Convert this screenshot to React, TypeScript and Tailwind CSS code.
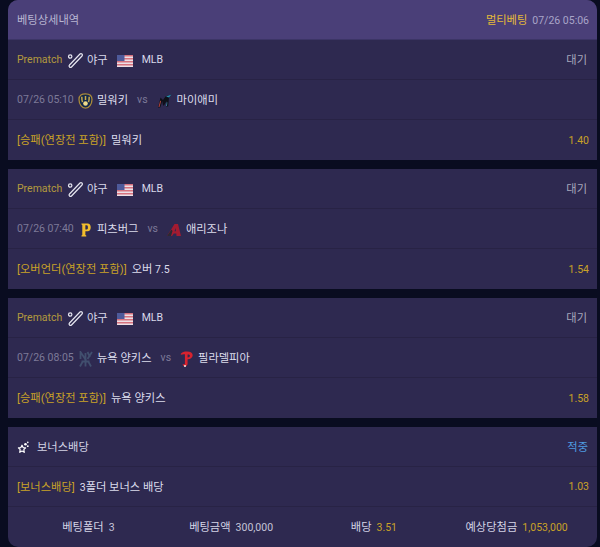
import React from "react";

const T = ({ children }: { children: string }) => (
  <>
    {children.split(/([가-힣()\[\]]+(?: [가-힣()\[\]]+)*)/).filter(Boolean).map((p, i) =>
      /[가-힣]/.test(p) ? (
        <span key={i} className="text-[11.25px]">{p}</span>
      ) : (
        <span key={i}>{p}</span>
      ),
    )}
  </>
);

const Bat = () => (
  <svg width="17" height="17" viewBox="0 0 17 17" className="shrink-0" fill="none" strokeLinecap="round">
    <path d="M14 3 3.500 14" stroke="#e6e6f0" strokeWidth="4" />
    <path d="M14 3 3.500 14" stroke="#2e2950" strokeWidth="1.600" />
    <circle cx="3.200" cy="4.500" r="1.700" stroke="#e6e6f0" strokeWidth="1.200" />
  </svg>
);

const Flag = () => (
  <svg width="16" height="12" viewBox="0 0 16 12" className="shrink-0">
    <rect width="16" height="12" fill="#ecdfe6" />
    <rect y="0" width="16" height="1.500" fill="#d5727e" />
    <rect y="3" width="16" height="1.500" fill="#d5727e" />
    <rect y="6" width="16" height="1.500" fill="#d5727e" />
    <rect y="9" width="16" height="1.500" fill="#d5727e" />
    <rect width="7.500" height="6" fill="#4e5a9a" />
  </svg>
);

const Brewers = () => (
  <svg width="15" height="16" viewBox="0 0 15 16" className="shrink-0">
    <path d="M7.500.8C11.200.8 14 2.200 14 6.500c0 4.500-3 8.700-6.500 8.700S1 11 1 6.500C1 2.200 3.800.8 7.500.8Z" fill="#12284b" stroke="#a9893a" strokeWidth="1.300" />
    <path d="M3.800 3.800c0 3 .1 4.400.7 5.400M7.500 3v4M11.200 3.800c0 3-.1 4.400-.7 5.400" stroke="#c9ab4c" strokeWidth="1.500" fill="none" />
    <circle cx="7.500" cy="10.500" r="2.300" fill="#f0dc8a" />
  </svg>
);

const Marlins = () => (
  <svg width="15" height="14" viewBox="0 0 15 14" className="shrink-0">
    <path d="M1 13.500 3.500 3.500 6 6l2.500-3.500L14.500.5 12 3.500l-.8 9h-2l.4-5.500-2.600 4.500H6L5.300 7l-2 6.500Z" fill="#0e1119" />
    <path d="M9 2.500 14.500.5 12 3.500Z" fill="#2a8fb0" />
    <path d="M1.500 13 3.200 6.500l.8.800-1.500 5.700Z" fill="#b8443f" />
    <path d="M9 12l.8-4 .6.400-.5 3.600Z" fill="#3a8aa8" />
  </svg>
);

const Pirates = () => (
  <svg width="10" height="14" viewBox="0 0 11 14" className="shrink-0" preserveAspectRatio="none">
    <path fillRule="evenodd" d="M.5.500h6.800c2.100 0 3.400 1.400 3.400 3.800S9.400 8.300 7.300 8.300H4.800V12l1 .6v1H.5v-1l.9-.6V2L.5 1.500Zm4.300 1.800v4.100h1.500c1 0 1.300-.8 1.300-2s-.3-2.100-1.300-2.100Z" fill="#f2bd2c" />
  </svg>
);

const Dbacks = () => (
  <svg width="14" height="12" viewBox="0 0 14 12" className="shrink-0">
    <path fillRule="evenodd" d="M7.500 0h3.500L14 12H9.500l-.2-2.500H6.800L5 12H0Zm1.200 4L7.500 7.300h1.500Z" fill="#a41b30" />
    <path d="M0 12 4.500 5.500l1 1.500L4 12Z" fill="#2a2a34" />
  </svg>
);

const Yankees = () => (
  <svg width="15" height="16" viewBox="0 0 15 16" className="shrink-0" fill="none" stroke="#414f6e" strokeWidth="1.800">
    <path d="M2.500 8V1l5 7.500V2" />
    <path d="M7.500 8v7.500M9.500 1l2.500 5M14 1 9.500 8M2 15.500l3-5.500M13 15.500 10 10M3.500 10.500h8" />
  </svg>
);

const Phillies = () => (
  <svg width="13" height="16" viewBox="0 0 13 16" className="shrink-0">
    <path fillRule="evenodd" d="M.8 2.800C2 1 4.200.4 7 .4c3.600 0 5.700 1.600 5.700 3.900S10.500 8.300 8 8.300h-.4v4.300c0 1.700-1.200 2.900-2.600 2.900S2.600 14.500 2.600 13.300h1.700c.3.300.6.100.6-.8V3.300c-1.500-.2-2.600.1-4.100.5Zm6.800.6v3h.3c1 0 2-.7 2-1.600S9 3.400 7.900 3.400Z" fill="#d8232f" />
    <circle cx="5" cy="14.900" r="1" fill="#eeeeee" />
  </svg>
);

const Star = () => (
  <svg width="13" height="13" viewBox="0 0 13 13" className="shrink-0" fill="none">
    <path d="m5 4.200 1.100 2.400 2.500.3-1.800 1.800.5 2.600L5 10l-2.300 1.300.5-2.600L1.400 6.900l2.500-.3Z" stroke="#ffffff" strokeWidth="1.200" strokeLinejoin="round" />
    <circle cx="8.500" cy="3.300" r="1.300" fill="#ffffff" />
    <circle cx="10.800" cy="1.400" r=".8" fill="#ffffff" />
    <circle cx="10.800" cy="5.200" r=".9" fill="#ffffff" />
  </svg>
);

const Row = ({ children, last }: { children: React.ReactNode; last?: boolean }) => (
  <div className={`flex h-[40px] items-center justify-between pl-[9px] pr-[8px] pt-[2px] ${last ? "" : "border-b border-[#282345]"}`}>
    {children}
  </div>
);

const Meta = () => (
  <Row>
    <div className="flex items-center">
      <span className="w-[45px] whitespace-nowrap text-[#b49a3e]">Prematch</span>
      <span className="ml-[5px]"><Bat /></span>
      <span className="ml-[3px] text-[#d9d9ea]"><T>야구</T></span>
      <span className="ml-[9px]"><Flag /></span>
      <span className="ml-[9px] text-[#d9d9ea]">MLB</span>
    </div>
    <span className="pr-[2px] text-[#a7a7bb]"><T>대기</T></span>
  </Row>
);

type G = { time: string; l: React.ReactNode; home: string; r: React.ReactNode; away: string; market: string; pick: string; odd: string };

const Game = ({ g }: { g: G }) => (
  <>
    <Meta />
    <Row>
      <div className="flex items-center">
        <span className="w-[57px] whitespace-nowrap text-[#7d7a98]">{g.time}</span>
        <span className="flex w-[23px] justify-center">{g.l}</span>
        <span className="whitespace-nowrap text-[#dcdcec]"><T>{g.home}</T></span>
        <span className="mx-[9px] text-[10.5px] text-[#7d7a98]">vs</span>
        {g.r}
        <span className="ml-[5px] whitespace-nowrap text-[#dcdcec]"><T>{g.away}</T></span>
      </div>
    </Row>
    <Row last>
      <div className="flex items-center">
        <span className="whitespace-nowrap text-[#c9a227]"><T>{g.market}</T></span>
        <span className="ml-[5px] whitespace-nowrap text-[#dcdcec]"><T>{g.pick}</T></span>
      </div>
      <span className="text-[#c9a227]">{g.odd}</span>
    </Row>
  </>
);

const games: G[] = [
  { time: "07/26 05:10", l: <Brewers />, home: "밀워키", r: <Marlins />, away: "마이애미", market: "[승패(연장전 포함)]", pick: "밀워키", odd: "1.40" },
  { time: "07/26 07:40", l: <Pirates />, home: "피츠버그", r: <Dbacks />, away: "애리조나", market: "[오버언더(연장전 포함)]", pick: "오버 7.5", odd: "1.54" },
  { time: "07/26 08:05", l: <Yankees />, home: "뉴욕 양키스", r: <Phillies />, away: "필라델피아", market: "[승패(연장전 포함)]", pick: "뉴욕 양키스", odd: "1.58" },
];

const Summary = ({ a, b, gold }: { a: string; b: string; gold?: boolean }) => (
  <div className="flex items-center justify-center">
    <span className="whitespace-nowrap text-[#d4d4e6]"><T>{a}</T></span>
    <span className={`ml-[5px] ${gold ? "text-[#c9a227]" : "text-[#c4c4d8]"}`}>{b}</span>
  </div>
);

export default function App() {
  return (
    <div className="h-[547px] w-[600px] overflow-hidden bg-[#090c20] pl-[8px] pr-[3px] text-[10.5px] leading-none [font-family:Roboto,'Noto_Sans_CJK_KR',sans-serif]">
      <div className="flex flex-col gap-[9px]">
        <div className="overflow-hidden rounded-t-[10px] bg-[#2e2950]">
          <div className="flex h-[40px] items-center justify-between border-b border-[#3c3566] bg-[#4a3f78] pl-[9px] pr-[8px] pt-[3px]">
            <span className="text-[#b9b6d2]"><T>베팅상세내역</T></span>
            <div className="flex items-center">
              <span className="text-[#e3b93a]"><T>멀티베팅</T></span>
              <span className="ml-[5px] text-[#a9a5c8]">07/26 05:06</span>
            </div>
          </div>
          <Game g={games[0]} />
        </div>
        {games.slice(1).map((g) => (
          <div key={g.time} className="bg-[#2e2950]">
            <Game g={g} />
          </div>
        ))}
        <div className="overflow-hidden rounded-b-[10px] bg-[#2e2950]">
          <Row>
            <div className="flex items-center">
              <Star />
              <span className="ml-[7px] text-[#d4d4e6]"><T>보너스배당</T></span>
            </div>
            <span className="pr-[1px] text-[#4f9be0]"><T>적중</T></span>
          </Row>
          <Row>
            <div className="flex items-center">
              <span className="text-[#c9a227]"><T>[보너스배당]</T></span>
              <span className="ml-[5px] text-[#dcdcec]"><T>3폴더 보너스 배당</T></span>
            </div>
            <span className="text-[#c9a227]">1.03</span>
          </Row>
          <div className="grid h-[40px] grid-cols-4 items-center px-[9px] pt-[2px]">
            <Summary a="베팅폴더" b="3" />
            <Summary a="베팅금액" b="300,000" />
            <Summary a="배당" b="3.51" gold />
            <Summary a="예상당첨금" b="1,053,000" gold />
          </div>
        </div>
      </div>
    </div>
  );
}
